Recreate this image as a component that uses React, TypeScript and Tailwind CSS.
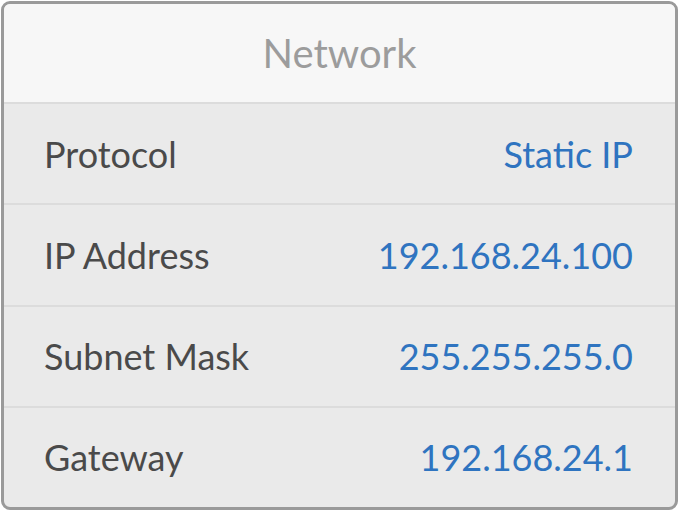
const rows = [
  { label: "Protocol", value: "Static IP" },
  { label: "IP Address", value: "192.168.24.100" },
  { label: "Subnet Mask", value: "255.255.255.0" },
  { label: "Gateway", value: "192.168.24.1" },
];

export default function App() {
  return (
    <div className="w-[679px] h-[511px] bg-white p-[1px]" style={{ fontFamily: "Lato, 'Open Sans', sans-serif" }}>
      <div className="w-[677px] h-[509px] border-[3px] border-[#9a9a9a] rounded-[9px] overflow-hidden flex flex-col bg-[#eaeaea]">
        <div className="h-[98px] shrink-0 bg-[#f7f7f7] flex items-center justify-center">
          <span className="text-[40px] text-[#9c9c9c] leading-none">Network</span>
        </div>
        {rows.map((row) => (
          <div key={row.label} className="flex-1 border-t-2 border-[#dcdcdc] flex items-center justify-between pl-[40px] pr-[42px]">
            <span className="text-[36px] text-[#4a4a4a] leading-none">{row.label}</span>
            <span className="text-[36px] text-[#2f74c0] leading-none">{row.value}</span>
          </div>
        ))}
      </div>
    </div>
  );
}
